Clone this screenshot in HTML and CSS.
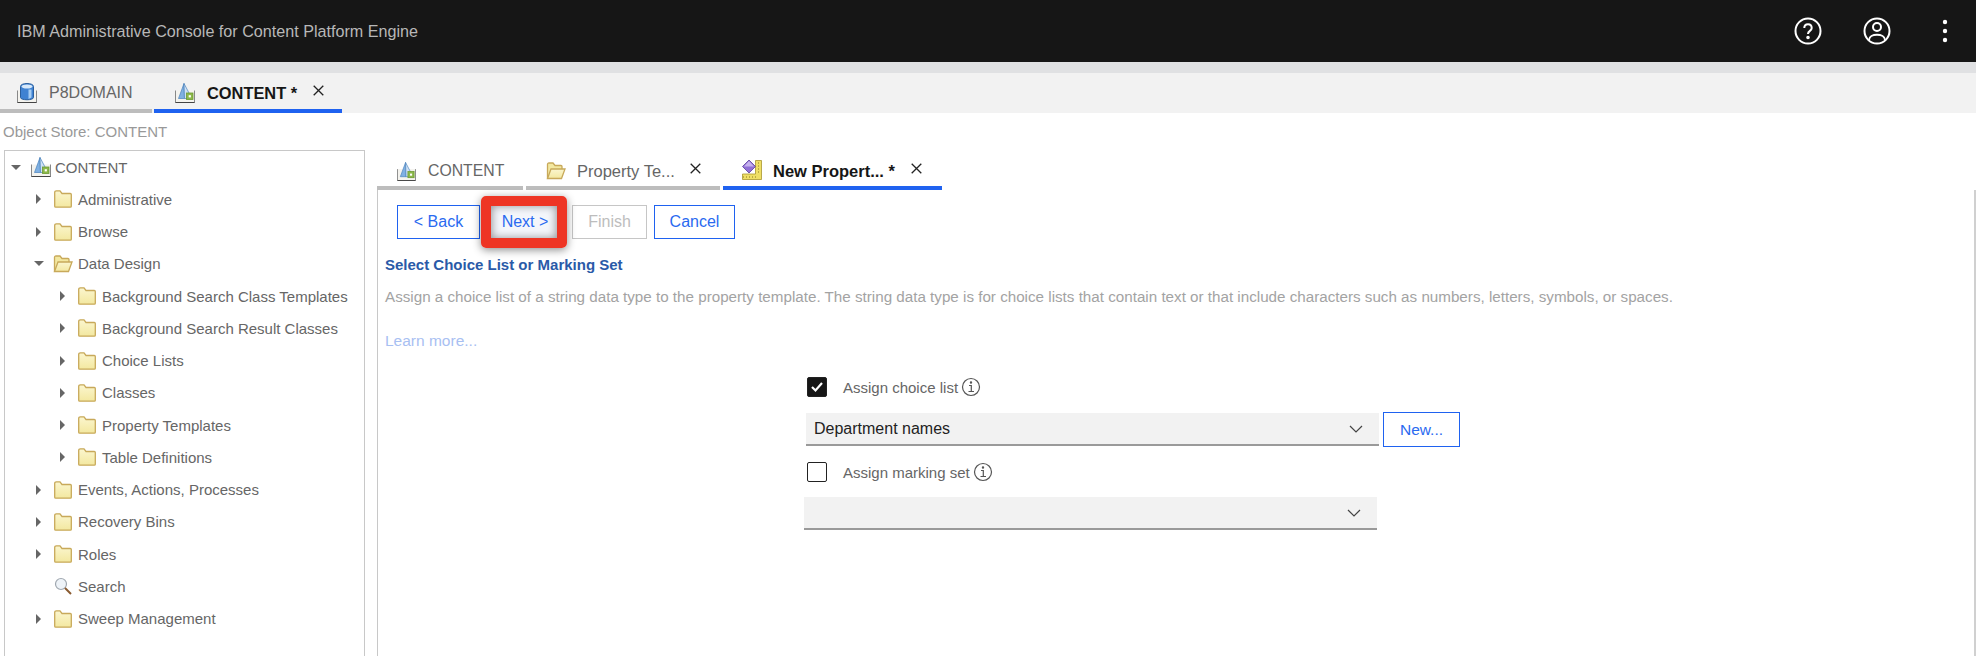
FILE: index.html
```html
<!DOCTYPE html>
<html>
<head>
	<title>Administrative Console</title>
	<link rel="stylesheet" href="styles.css">
</head>
<body>
	<svg class="defs" width="0" height="0">
		<defs>
			<linearGradient id="folderfill" x1="0" y1="0" x2="0" y2="1">
				<stop offset="0" stop-color="#fbf6cf"/>
				<stop offset="1" stop-color="#f3e8a0"/>
			</linearGradient>
			<symbol id="store" viewBox="0 0 20 20">
				<path d="M.5 7.500v12h19v-12" fill="#f4f3ee" stroke="#888"/>
				<path d="M.5 19.500h19" stroke="#444"/>
				<path d="M9 .5 3.500 15.500H9.500z" fill="#7fb0e2" stroke="#4a82bc" stroke-width=".7"/>
				<path d="M9 .5 14 10v5.500H9.500z" fill="#cfe2f5" stroke="#4a82bc" stroke-width=".7"/>
				<rect x="11.500" y="10" width="6.500" height="6.500" fill="#8cb84a" stroke="#6b9a30" stroke-width=".8"/>
				<rect x="13.700" y="12.200" width="2.200" height="2.200" fill="#fff"/>
			</symbol>
			<symbol id="domain" viewBox="0 0 20 20">
				<path d="M.5 7.500v12h19v-12" fill="#f4f3ee" stroke="#888"/>
				<path d="M.5 19.500h19" stroke="#444"/>
				<path d="M3.500 3.500c0-4 13-4 13 0v11c0 3-13 3-13 0z" fill="#3f82d2" stroke="#2a5f9e"/>
				<ellipse cx="10" cy="3.500" rx="5.500" ry="2" fill="#d6e8fa"/>
				<path d="M11.500 6.500h3v8l-3 1.500z" fill="#a6cdf3"/>
			</symbol>
			<symbol id="folder" viewBox="0 0 18 18">
				<path d="M.7 2.500q0-1.700 1.700-1.700h3.600l2 2.700h8.300q1 0 1 1v11.700q0 1-1 1H1.700q-1 0-1-1z" fill="url(#folderfill)" stroke="#c8a95a" stroke-width="1.300"/>
			</symbol>
			<symbol id="folder-open" viewBox="0 0 20 18">
				<path d="M1.500 16.500V2.500q0-1.500 1.500-1.500h4l2 2.500h6q1 0 1 1V7" fill="#f3e8a0" stroke="#c8a95a" stroke-width="1.300"/>
				<path d="M1.500 16.500 5 7h14l-3.500 9.500z" fill="url(#folderfill)" stroke="#c8a95a" stroke-width="1.300"/>
			</symbol>
			<symbol id="template" viewBox="0 0 20 20">
				<path d="M.5 14h13V.5h6v19H.5z" fill="#efdf66" stroke="#a8952e" stroke-width=".8"/>
				<path d="M1 17h1M4 17h1M7 17h1M10 17h1M13 17h1M16 3h1M16 6h1M16 9h1M16 12h1" stroke="#8a7a20"/>
				<path d="M7 0l6.500 6.500L7 13 .5 6.500z" fill="#9170d6" stroke="#5b3f9c" stroke-width=".8"/>
				<path d="M7 1 2 6.500h10z" fill="#c6b2ee"/>
			</symbol>
			<symbol id="x" viewBox="0 0 11 11">
				<path d="M.7.7l9.600 9.600M10.300.7.700 10.300" stroke="#222" stroke-width="1.300" fill="none"/>
			</symbol>
		</defs>
	</svg>

	<header class="topbar">
		<span class="topbar-title">IBM Administrative Console for Content Platform Engine</span>
		<div class="topbar-icons">
			<svg class="help" width="28" height="28" viewBox="0 0 28 28" fill="none" stroke="#fff" stroke-width="2">
				<circle cx="14" cy="14" r="12.500"/>
				<path d="M10.300 11c0-5 7.400-5 7.400 0 0 3-3.700 2.800-3.700 6"/>
				<circle cx="14" cy="20.500" r=".8" fill="#fff"/>
			</svg>
			<svg class="user" width="28" height="28" viewBox="0 0 28 28" fill="none" stroke="#fff" stroke-width="2">
				<circle cx="14" cy="14" r="12.500"/>
				<circle cx="14" cy="10" r="4"/>
				<path d="M6 23c0-7 16-7 16 0"/>
			</svg>
			<svg class="more" width="6" height="24" viewBox="0 0 6 24" fill="#fff">
				<circle cx="3" cy="3" r="2.200"/>
				<circle cx="3" cy="12" r="2.200"/>
				<circle cx="3" cy="21" r="2.200"/>
			</svg>
		</div>
	</header>
	<div class="strip"></div>

	<nav class="tabs top-tabs">
		<div class="tab tab-domain">
			<svg class="tab-icon"><use href="#domain"/></svg>
			<span>P8DOMAIN</span>
		</div>
		<div class="tab tab-store active">
			<svg class="tab-icon"><use href="#store"/></svg>
			<span>CONTENT *</span>
			<svg class="close"><use href="#x"/></svg>
		</div>
	</nav>

	<div class="store-label">Object Store: CONTENT</div>

	<main class="workspace">
		<aside class="tree">
			<div class="node root"><b class="arrow open"></b><svg class="ico-store"><use href="#store"/></svg><span>CONTENT</span></div>
			<div class="node"><b class="arrow"></b><svg class="ico"><use href="#folder"/></svg><span>Administrative</span></div>
			<div class="node"><b class="arrow"></b><svg class="ico"><use href="#folder"/></svg><span>Browse</span></div>
			<div class="node"><b class="arrow open"></b><svg class="ico ico-open"><use href="#folder-open"/></svg><span>Data Design</span></div>
			<div class="node sub"><b class="arrow"></b><svg class="ico"><use href="#folder"/></svg><span>Background Search Class Templates</span></div>
			<div class="node sub"><b class="arrow"></b><svg class="ico"><use href="#folder"/></svg><span>Background Search Result Classes</span></div>
			<div class="node sub"><b class="arrow"></b><svg class="ico"><use href="#folder"/></svg><span>Choice Lists</span></div>
			<div class="node sub"><b class="arrow"></b><svg class="ico"><use href="#folder"/></svg><span>Classes</span></div>
			<div class="node sub"><b class="arrow"></b><svg class="ico"><use href="#folder"/></svg><span>Property Templates</span></div>
			<div class="node sub"><b class="arrow"></b><svg class="ico"><use href="#folder"/></svg><span>Table Definitions</span></div>
			<div class="node"><b class="arrow"></b><svg class="ico"><use href="#folder"/></svg><span>Events, Actions, Processes</span></div>
			<div class="node"><b class="arrow"></b><svg class="ico"><use href="#folder"/></svg><span>Recovery Bins</span></div>
			<div class="node"><b class="arrow"></b><svg class="ico"><use href="#folder"/></svg><span>Roles</span></div>
			<div class="node">
				<b class="arrow none"></b>
				<svg class="ico" viewBox="0 0 18 18">
					<circle cx="7" cy="7" r="5.500" fill="#eef3f8" stroke="#a0a8b0" stroke-width="1.200"/>
					<path d="M11 11l6 6" stroke="#8a5a30" stroke-width="2"/>
				</svg>
				<span>Search</span>
			</div>
			<div class="node"><b class="arrow"></b><svg class="ico"><use href="#folder"/></svg><span>Sweep Management</span></div>
		</aside>

		<section class="editor">
			<nav class="tabs inner-tabs">
				<div class="tab tab-a">
					<svg class="tab-icon small"><use href="#store"/></svg>
					<span>CONTENT</span>
				</div>
				<div class="tab tab-b">
					<svg class="tab-icon folder"><use href="#folder-open"/></svg>
					<span>Property Te...</span>
					<svg class="close"><use href="#x"/></svg>
				</div>
				<div class="tab tab-c active">
					<svg class="tab-icon tmpl"><use href="#template"/></svg>
					<span>New Propert... *</span>
					<svg class="close"><use href="#x"/></svg>
				</div>
			</nav>

			<div class="pane">
				<div class="wizard-buttons">
					<button class="btn btn-back">&lt; Back</button>
					<button class="btn btn-next">Next &gt;</button>
					<button class="btn btn-finish" disabled>Finish</button>
					<button class="btn btn-cancel">Cancel</button>
				</div>

				<h2 class="step-title">Select Choice List or Marking Set</h2>
				<p class="step-desc">Assign a choice list of a string data type to the property template. The string data type is for choice lists that contain text or that include characters such as numbers, letters, symbols, or spaces.</p>
				<a class="learn">Learn more...</a>

				<form class="choice-form">
					<div class="check-row">
						<span class="check on"><svg width="14" height="12" viewBox="0 0 14 12" fill="none" stroke="#fff" stroke-width="2.200"><path d="M2 6l3.500 3.500L12 2"/></svg></span>
						<label>Assign choice list</label>
						<svg class="info" width="20" height="20" viewBox="0 0 20 20" fill="none" stroke="#555" stroke-width="1.200">
							<circle cx="10" cy="10" r="8.500"/>
							<path d="M8 8.500h2.300v5.500M7.500 14.500h5.500"/>
							<circle cx="10" cy="5.500" r=".6" fill="#555"/>
						</svg>
					</div>
					<div class="select-row first">
						<div class="select"><span>Department names</span><svg class="chev" width="14" height="8" viewBox="0 0 14 8" fill="none" stroke="#444" stroke-width="1.200"><path d="M1 1l6 6 6-6"/></svg></div>
						<button type="button" class="btn btn-new">New...</button>
					</div>
					<div class="check-row second">
						<span class="check"></span>
						<label>Assign marking set</label>
						<svg class="info" width="20" height="20" viewBox="0 0 20 20" fill="none" stroke="#555" stroke-width="1.200">
							<circle cx="10" cy="10" r="8.500"/>
							<path d="M8 8.500h2.300v5.500M7.500 14.500h5.500"/>
							<circle cx="10" cy="5.500" r=".6" fill="#555"/>
						</svg>
					</div>
					<div class="select-row last">
						<div class="select"><span></span><svg class="chev" width="14" height="8" viewBox="0 0 14 8" fill="none" stroke="#444" stroke-width="1.200"><path d="M1 1l6 6 6-6"/></svg></div>
					</div>
				</form>
			</div>
		</section>
	</main>
</body>
</html>
```

FILE: styles.css
```css
html, body{
	margin: 0;
	height: 100%;
}

body{
	display: flex;
	flex-direction: column;
	height: 656px;
	overflow: hidden;
	background: #fff;
	font-family: "Liberation Sans", Arial, sans-serif;
	font-size: 15px;
	color: #666;
}

.defs{
	position: absolute;
}

/* top bar */
.topbar{
	flex: none;
	display: flex;
	align-items: center;
	justify-content: space-between;
	height: 62px;
	padding-left: 17px;
	background: #161616;
	box-sizing: border-box;
}

.topbar-title{
	font-size: 16.150px;
	color: #b8b8b8;
}

.topbar-icons{
	display: flex;
	align-items: center;
	padding-right: 28px;
}

.help{ margin-right: 41px; }
.user{ margin-right: 51px; }

.strip{
	flex: none;
	height: 11px;
	background: #e0e1e3;
}

/* tabs */
.tabs{
	display: flex;
	flex: none;
}

.tab{
	display: flex;
	align-items: center;
	box-sizing: border-box;
	border-bottom: 4px solid #bdbdbd;
	font-size: 16px;
	color: #666;
}

.tab.active{
	border-bottom-color: #1f62f0;
	color: #161616;
	font-weight: bold;
	font-size: 16.400px;
}

.tab-icon{
	width: 20px;
	height: 20px;
	flex: none;
}

.close{
	flex: none;
	width: 11px;
	height: 11px;
}

.top-tabs{
	height: 40px;
	background: #f2f2f2;
}

.top-tabs .tab{
	height: 40px;
	padding-top: 4px;
}

.top-tabs .close{
	margin-top: -5px;
}

.tab-domain{
	width: 152px;
	margin-right: 2px;
	padding-left: 17px;
}

.tab-domain span{ margin-left: 12px; }

.tab-store{
	width: 188px;
	padding-left: 21px;
}

.tab-store span{ margin-left: 12px; }
.tab-store .close{ margin-left: 16px; }

.store-label{
	flex: none;
	height: 37px;
	padding-left: 3px;
	line-height: 37px;
	font-size: 15px;
	color: #999;
}

/* body of the page */
.workspace{
	flex: 1;
	display: flex;
	min-height: 0;
}

.tree{
	flex: none;
	width: 361px;
	margin-left: 4px;
	box-sizing: border-box;
	border: 1px solid #c8c8c8;
	border-bottom: 0;
}

.node{
	display: flex;
	align-items: center;
	height: 32.250px;
	padding-left: 31px;
	white-space: nowrap;
}

.node.sub{
	padding-left: 55px;
}

.arrow{
	flex: none;
	width: 0;
	height: 0;
	margin-right: 13px;
	border-style: solid;
	border-width: 5px 0 5px 5px;
	border-color: transparent transparent transparent #666;
}

.arrow.open{
	margin-left: -2px;
	margin-right: 9px;
	border-width: 5px 5px 0 5px;
	border-color: #666 transparent transparent transparent;
}

.arrow.none{
	border-color: transparent;
}

.ico{
	flex: none;
	width: 18px;
	height: 18px;
	margin-right: 6px;
}

.ico-open{
	width: 20px;
	margin-right: 5px;
}

.root{
	padding-left: 8px;
}

.ico-store{
	flex: none;
	width: 20px;
	height: 20px;
	margin-left: 1px;
	margin-right: 4px;
}

.editor{
	flex: 1;
	min-width: 0;
	display: flex;
	flex-direction: column;
	margin-left: 12px;
}

.inner-tabs{
	height: 40px;
}

.inner-tabs .tab{
	height: 40px;
	padding-top: 6px;
	margin-right: 3px;
}

.inner-tabs .close{
	margin-top: -5px;
}

.tab-a{
	width: 146px;
	padding-left: 20px;
}

.tab-a span{ margin-left: 12px; font-size: 15.800px; }

.tab-b{
	width: 194px;
	padding-left: 20px;
}

.tab-b span{ margin-left: 11px; font-size: 16.500px; }
.tab-b .close{ margin-left: 15px; }

.tab-c{
	width: 219px;
	padding-left: 19px;
}

.tab-c span{ margin-left: 11px; font-size: 16.500px; }
.tab-c .close{ margin-left: 16px; }

.tab-icon.tmpl{ margin-top: -3px; }
.tab-icon.small{ width: 19px; height: 19px; }

.pane{
	flex: 1;
	min-width: 0;
	padding-left: 7px;
	border-left: 1px solid #c8c8c8;
	border-right: 2px solid #d0d0d0;
}

.wizard-buttons{
	display: flex;
	gap: 8px;
	padding: 15px 0 0 12px;
}

.btn{
	box-sizing: border-box;
	height: 34px;
	padding: 0;
	border: 1px solid #1f62f0;
	background: #fff;
	color: #2a6af0;
	font-family: inherit;
	font-size: 16px;
}

.btn-back{ width: 83px; margin-right: 3px; }
.btn-cancel{ width: 81px; margin-left: -1px; }

.btn-next{
	position: relative;
	width: 66px;
	margin-right: 7px;
	padding-left: 2px;
	border: 0;
	box-shadow: inset 0 0 9px 1px rgba(0,0,0,.4);
	background: #f4f6fb;
}

/* the red marker someone drew over the screenshot */
.btn-next::after{
	content: "";
	position: absolute;
	inset: -9px -10px -9px -10px;
	border: 10px solid #ee3524;
	border-radius: 5px;
	box-shadow: 0 2px 8px rgba(0,0,0,.45);
}

.btn-finish{
	width: 75px;
	border-color: #c6c6c6;
	color: #bdbdbd;
}

.step-title{
	margin: 18px 0 0;
	font-size: 15px;
	line-height: 16px;
	color: #2a5aa8;
}

.step-desc{
	margin: 16px 0 0;
	font-size: 15.200px;
	line-height: 16px;
	color: #a3a3a3;
	white-space: nowrap;
}

.learn{
	display: block;
	margin-top: 28px;
	font-size: 15.500px;
	line-height: 16px;
	color: #a8c0f2;
}

.choice-form{
	width: 655px;
	margin: 28px 0 0 421px;
}

.check-row{
	display: flex;
	align-items: center;
	height: 20px;
	font-size: 15px;
	color: #666;
}

.check{
	flex: none;
	display: flex;
	align-items: center;
	justify-content: center;
	box-sizing: border-box;
	width: 20px;
	height: 20px;
	margin-left: 1px;
	margin-right: 16px;
	border: 1px solid #222;
	border-radius: 2px;
}

.check.on{
	background: #161616;
}

.info{
	margin-left: 3px;
}

.select-row{
	display: flex;
	align-items: flex-start;
}

.select-row.first{
	margin-top: 16px;
}

.select-row.last{
	margin-top: 15px;
	margin-left: -2px;
}

.select{
	display: flex;
	align-items: center;
	justify-content: space-between;
	box-sizing: border-box;
	width: 573px;
	height: 33px;
	padding: 0 16px 0 8px;
	background: #f2f2f2;
	border-bottom: 2px solid #9a9a9a;
	font-size: 16px;
	color: #222;
}

.btn-new{
	width: 77px;
	height: 35px;
	margin: -1px 0 0 4px;
	font-size: 15.500px;
}

.check-row.second{
	margin-top: 15px;
}
```
